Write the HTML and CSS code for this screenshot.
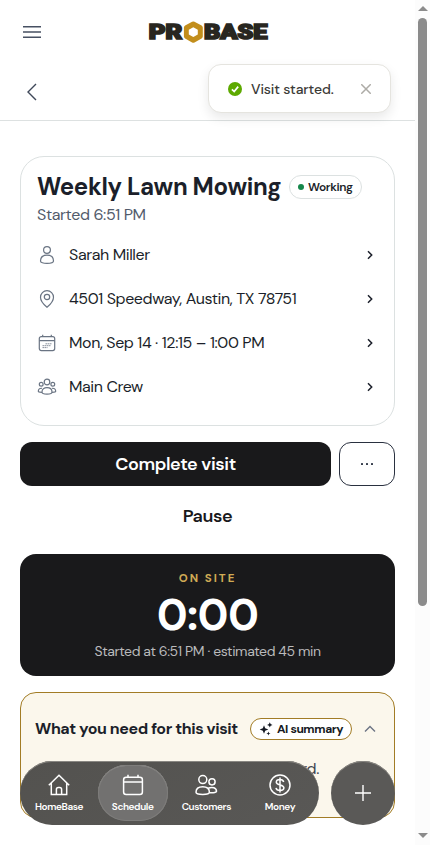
FILE: index.html
```html
<!DOCTYPE html>
<html lang="en">
<head>
<meta charset="utf-8">
<meta name="viewport" content="width=device-width, initial-scale=1">
<title>Visit</title>
<link rel="stylesheet" href="styles.css">
</head>
<body>
<div class="app">
  <div class="page">
    <header class="topbar">
      <svg class="menu" width="18" height="12" viewBox="0 0 18 12"><path d="M0 .8h18M0 6h18M0 11.2h18"/></svg>
      <svg class="logo" width="121" height="28" viewBox="0 -3 121 28" aria-label="PROBASE">
        <text x="0.8" y="17.700" textLength="33.500" lengthAdjust="spacingAndGlyphs">PR</text>
        <path class="hex" transform="translate(1.600 .4)" fill-rule="evenodd" d="M42.500 .3q1.200-.6 2.400 0l7.100 3.800q1.200.8 1.200 2v9q0 1.200-1.200 2l-7.100 3.900q-1.200.6-2.400 0l-7-3.900q-1.200-.8-1.200-2v-9q0-1.200 1.200-2zM43.700 5.800l-4.500 2.500v4.900l4.500 2.500 4.500-2.500V8.300z"/>
        <text x="56" y="17.700" textLength="63.500" lengthAdjust="spacingAndGlyphs">BASE</text>
      </svg>
    </header>
    <div class="backbar">
      <svg class="back" width="10" height="18" viewBox="0 0 10 18"><path d="M9 1 1 9l8 8"/></svg>
    </div>

    <main class="content">
      <section class="card visit">
        <div class="title-row">
          <h1>Weekly Lawn Mowing</h1>
          <span class="status"><i class="dot"></i><span>Working</span></span>
        </div>
        <p class="started">Started 6:51 PM</p>
        <ul class="rows">
          <li>
            <svg class="ico" viewBox="0 0 20 20"><circle cx="10" cy="5" r="3.400"/><path d="M3.500 16c0-4 3-5.800 6.500-5.800s6.500 1.800 6.500 5.800c0 1.600-2.800 2.400-6.500 2.400S3.500 17.600 3.500 16z"/></svg>
            <span class="label">Sarah Miller</span>
            <svg class="chev" viewBox="0 0 6 8"><path d="m1 .3 3.700 3.700L1 7.700"/></svg>
          </li>
          <li>
            <svg class="ico" viewBox="0 0 20 20"><path d="M10 18.200C8.200 16.600 3.500 13 3.500 8.200a6.500 6.500 0 0 1 13 0c0 4.800-4.700 8.400-6.500 10z"/><circle cx="10" cy="8" r="2.700"/></svg>
            <span class="label">4501 Speedway, Austin, TX 78751</span>
            <svg class="chev" viewBox="0 0 6 8"><path d="m1 .3 3.700 3.700L1 7.700"/></svg>
          </li>
          <li>
            <svg class="ico" viewBox="0 0 20 20"><rect x="2.300" y="3.600" width="15.400" height="14" rx="2"/><path d="M2.300 7.600h15.400M5.700 1.800v2M14.300 1.800v2"/><path class="dots" d="M8.500 10.800h6.500M5.500 12.700h8.500M5.500 14.600h5"/></svg>
            <span class="label">Mon, Sep 14 · 12:15 – 1:00 PM</span>
            <svg class="chev" viewBox="0 0 6 8"><path d="m1 .3 3.700 3.700L1 7.700"/></svg>
          </li>
          <li>
            <svg class="ico" viewBox="0 0 20 20"><circle cx="10" cy="5" r="2.800"/><circle cx="4.200" cy="7.300" r="1.900"/><circle cx="15.800" cy="7.300" r="1.900"/><path d="M5 15c0-2.900 2.300-4.300 5-4.300s5 1.400 5 4.300c0 1.400-2.300 2.100-5 2.100S5 16.400 5 15zM5 11.300c-2.300-.3-3.700.9-3.700 3 0 .7 1.300 1 3.500 1M15 11.300c2.300-.3 3.700.9 3.700 3 0 .7-1.300 1-3.500 1"/></svg>
            <span class="label">Main Crew</span>
            <svg class="chev" viewBox="0 0 6 8"><path d="m1 .3 3.700 3.700L1 7.700"/></svg>
          </li>
        </ul>
      </section>

      <div class="actions">
        <button class="primary"><span>Complete visit</span></button>
        <button class="more" aria-label="More"><i></i><i></i><i></i></button>
      </div>
      <button class="pause"><span>Pause</span></button>

      <section class="timer">
        <div class="onsite">ON SITE</div>
        <div class="clock">0:00</div>
        <div class="detail">Started at 6:51 PM · estimated 45 min</div>
      </section>

      <section class="summary">
        <div class="summary-head">
          <h2>What you need for this visit</h2>
          <span class="ai">
            <svg width="14" height="14" viewBox="0 0 14 14"><path d="M5 3.200 6.200 6.300 9.300 7.500 6.200 8.700 5 11.800 3.800 8.700.7 7.500l3.100-1.200zM10.800.2l.8 1.900 1.900.8-1.900.8-.8 1.900-.8-1.900-1.900-.8 1.900-.8zM9.400 9.400l.6 1.500 1.500.6-1.500.6-.6 1.500-.6-1.500-1.500-.6 1.500-.6z"/></svg>
            <span>AI summary</span>
          </span>
          <svg class="up" width="12" height="8" viewBox="0 0 12 8"><path d="m1 6.500 5-5 5 5"/></svg>
        </div>
        <p class="note">Gate code is on the work order card.</p>
      </section>
    </main>

    <div class="toast">
      <svg width="14" height="14" viewBox="0 0 14 14"><circle cx="7" cy="7" r="7" fill="#5da900"/><path d="m3.900 7.300 2.300 2.200 4-4.900" fill="none" stroke="#fff" stroke-width="1.700"/></svg>
      <span class="msg">Visit started.</span>
      <svg class="close" width="10" height="10" viewBox="0 0 10 10"><path d="m.2.200 9.600 9.600m0-9.600-9.600 9.600"/></svg>
    </div>

    <div class="dock">
      <nav class="tabs">
        <a class="tab"><svg viewBox="0 0 24 24"><path d="M1.800 12.200 12 2.300l10.200 9.900M4.300 10.200v11.200h15.400V10.200M9.400 21.400v-5q0-1.900 1.900-1.900h1.400q1.900 0 1.900 1.900v5"/></svg><span>HomeBase</span></a>
        <a class="tab active"><svg viewBox="0 0 24 24"><rect x="2.600" y="4.300" width="18.800" height="17.100" rx="2.500"/><path d="M2.600 9h18.800M7 1.800v2.500M17 1.800v2.500"/></svg><span>Schedule</span></a>
        <a class="tab"><svg viewBox="0 0 24 24"><circle cx="8.800" cy="6.600" r="4"/><circle cx="18" cy="8.800" r="3.100"/><path d="M2 19.300c0-3.800 3-5.600 6.700-5.600s6.700 1.800 6.700 5.600c0 1.400-3 2.100-6.700 2.100S2 20.700 2 19.300zM14.200 15.300c4.200-2 8.300-.4 8.300 3.100 0 .9-2.500 1.400-6.800 1.200"/></svg><span>Customers</span></a>
        <a class="tab"><svg viewBox="0 0 24 24"><circle cx="12" cy="12" r="10"/><path d="M15.700 9c-.4-1.600-1.800-2.400-3.700-2.400-2.200 0-3.700 1-3.700 2.600 0 3.700 7.600 1.700 7.600 5.600 0 1.600-1.600 2.700-3.900 2.700-2.200 0-3.700-1-4-2.700M12 4.600v14.800"/></svg><span>Money</span></a>
      </nav>
      <button class="fab" aria-label="Add"><svg width="16" height="16" viewBox="0 0 16 16"><path d="M8 0v16M0 8h16"/></svg></button>
    </div>
  </div>

  <div class="scrollbar">
    <i class="arrow-up"></i>
    <i class="thumb"></i>
    <i class="arrow-down"></i>
  </div>
</div>
</body>
</html>
```
FILE: styles.css
```css
* { box-sizing: border-box; margin: 0; padding: 0; }
body {
  font-family: "DM Sans", Inter, "Liberation Sans", sans-serif;
  color: #1b1f2a;
  background: #fff;
  overflow: hidden;
}
button { font: inherit; border: 0; background: none; }
span, h1, h2, p { white-space: nowrap; }
.app { display: flex; width: 430px; height: 845px; overflow: hidden; }
.page { position: relative; width: 415px; height: 845px; overflow: hidden; }

.topbar { height: 63px; display: grid; grid-template-columns: 128px 121px; column-gap: 0; align-items: center; padding-left: 20px; }
.menu { margin-left: 3px; stroke: #475062; stroke-width: 1.4; }
.logo { overflow: visible; }
.logo text { font: 900 20px Roboto, sans-serif; fill: #282620; stroke: #282620; stroke-width: 1.7; }
.logo .hex { fill: #c28e1c; }
.backbar { height: 58px; border-bottom: 1px solid #dde1e1; padding: 20px 27px 0; }
.back { display: block; fill: none; stroke: #3f4859; stroke-width: 1.4; }

.content { padding: 35px 20px 0; }
.card { height: 270px; border: 1px solid #dce1e1; border-radius: 24px; padding: 16px; }
.title-row { display: flex; align-items: center; height: 28px; gap: 8px; }
h1 { width: 244px; font-size: 24px; line-height: 30px; font-weight: 700; letter-spacing: -.36px; }
.status { display: flex; align-items: center; gap: 4px; width: 73px; height: 24px; border: 1px solid #dce1e1; border-radius: 12px; padding-left: 8px; font-size: 12px; font-weight: 600; letter-spacing: -.4px; }
.dot { width: 6px; height: 6px; border-radius: 50%; background: #15874b; }
.started { margin-top: 2px; height: 24px; line-height: 24px; font-size: 16px; color: #525b6b; letter-spacing: -.4px; }
.rows { list-style: none; margin-top: 6px; }
.rows li { display: flex; align-items: center; height: 44px; }
.title-row > * { position: relative; top: -.5px; }
.ico { width: 20px; height: 20px; margin-right: 12px; fill: none; stroke: #6a7483; stroke-width: 1.2; }
.ico .dots { stroke-dasharray: 1.5 .5; stroke-width: .8; }
.label { flex: 1; font-size: 16px; line-height: 24px; letter-spacing: -.4px; }
.chev { width: 6px; height: 8px; margin-right: 5px; fill: none; stroke: #1b1f2a; stroke-width: 1.5; overflow: visible; }

.actions { display: flex; gap: 8px; margin-top: 16px; }
.primary { width: 311px; height: 44px; border-radius: 12px; background: #19191b; color: #fff; font-size: 18px; font-weight: 600; letter-spacing: -.4px; }
.more { width: 56px; height: 44px; border: 1px solid #2a3140; border-radius: 12px; display: flex; align-items: center; justify-content: center; gap: 3px; }
.more i { width: 2px; height: 2px; background: #343b4a; border-radius: .5px; }
.pause { display: block; width: 100%; height: 44px; margin-top: 8px; font-size: 18px; font-weight: 600; color: #19191b; letter-spacing: -.4px; }

.timer { height: 122px; margin-top: 16px; border-radius: 16px; background: #19191b; text-align: center; padding-top: 17px; color: #fff; }
.onsite { font-size: 11.5px; line-height: 16px; font-weight: 700; letter-spacing: 2px; color: #d0ab55; }
.clock { height: 48px; margin-top: 4px; font-size: 44px; line-height: 48px; font-weight: 700; letter-spacing: -.6px; }
.detail { margin-top: 1px; font-size: 14px; line-height: 22px; letter-spacing: -.4px; color: #bababb; }

.summary { height: 126px; margin-top: 16px; border: 1px solid #a27c25; border-radius: 16px; background: #fbf7ec; padding: 24px 14px 0; }
.summary-head { display: flex; align-items: center; height: 24px; }
h2 { width: 215px; font-size: 16px; line-height: 24px; font-weight: 700; letter-spacing: -.41px; }
.ai { width: 102px; height: 22px; display: flex; align-items: center; gap: 4px; border: 1px solid #a27c25; border-radius: 11px; background: #fff; padding-left: 8px; font-size: 12px; font-weight: 700; letter-spacing: -.4px; color: #151922; }
.ai svg { fill: #151922; }
.up { margin-left: 12px; fill: none; stroke: #6b7483; stroke-width: 1.4; }
.note { width: 284px; margin-top: 16px; font-size: 16px; line-height: 24px; text-align: right; letter-spacing: -.4px; color: #3f4652; }

.toast { position: absolute; left: 208px; top: 64px; width: 183px; height: 49px; display: flex; align-items: center; padding-left: 19px; border: 1px solid #e5e4df; border-radius: 13px; background: #fff; box-shadow: 0 5px 12px rgba(0,0,0,.09); }
.msg { width: 84px; margin-left: 9px; font-size: 14px; font-weight: 500; letter-spacing: -.1px; color: #3c3b38; }
.close { margin-left: 26px; stroke: #adaba6; stroke-width: 1.5; }

.dock { position: absolute; left: 20px; top: 761px; display: flex; gap: 12px; }
.tabs { width: 299px; height: 64px; display: flex; justify-content: space-between; align-items: flex-start; padding: 4px 4px 0; border-radius: 32px; background: linear-gradient(150deg, #53524f, #595856); box-shadow: inset 0 1px 0 #898782; }
.tab { width: 70px; height: 56px; display: flex; flex-direction: column; align-items: center; padding-top: 8px; border-radius: 28px; color: #fff; font-size: 10px; font-weight: 600; line-height: 14px; }
.tab svg { width: 24px; height: 24px; fill: none; stroke: #fff; stroke-width: 1.5; }
.tab span { margin-top: 3px; letter-spacing: -.4px; }
.active { background: #727170; box-shadow: inset 0 0 0 1px #7e7d7b, inset 0 1px 0 #9a9997; }
.fab { width: 64px; height: 64px; border-radius: 32px; background: #5a5957; box-shadow: inset 0 1px 0 #898782; display: flex; align-items: center; justify-content: center; }
.fab svg { stroke: #fff; stroke-width: 1.4; }

.scrollbar { width: 15px; height: 845px; background: #fcfcfc; display: flex; flex-direction: column; align-items: center; }
.arrow-up { margin-top: 6px; border: 5px solid transparent; border-top: 0; border-bottom: 5px solid #8b8b8b; }
.thumb { width: 9px; height: 588px; margin-top: 7px; border-radius: 5px; background: #8b8b8b; }
.arrow-down { margin-top: 227px; border: 5px solid transparent; border-bottom: 0; border-top: 5px solid #8b8b8b; }
```
